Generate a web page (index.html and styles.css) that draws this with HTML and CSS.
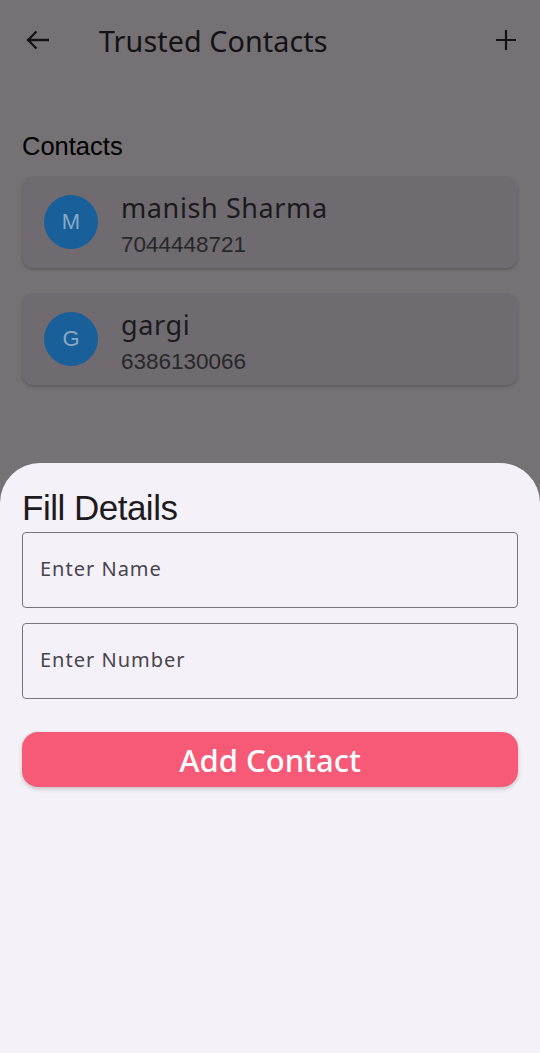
FILE: index.html
```html
<!DOCTYPE html>
<html>
<head>
<meta charset="utf-8">
<link rel="stylesheet" href="styles.css">
</head>
<body>
<div class="screen">
  <header class="appbar">
    <svg class="icon back" width="26" height="24" viewBox="0 0 26 24"><path d="M24 12H3.5M11.5 3.5L3 12L11.5 20.5" fill="none" stroke="#141214" stroke-width="2.3"/></svg>
    <h1 class="title">Trusted Contacts</h1>
    <svg class="icon plus" width="22" height="22" viewBox="0 0 22 22"><path d="M11 1V21M1 11H21" fill="none" stroke="#141214" stroke-width="2.2"/></svg>
  </header>
  <main class="content">
    <h2 class="section">Contacts</h2>
    <div class="card">
      <div class="avatar">M</div>
      <div class="info">
        <div class="name">manish Sharma</div>
        <div class="phone">7044448721</div>
      </div>
    </div>
    <div class="card">
      <div class="avatar">G</div>
      <div class="info">
        <div class="name">gargi</div>
        <div class="phone">6386130066</div>
      </div>
    </div>
  </main>
  <section class="sheet">
    <h2 class="sheet-title">Fill Details</h2>
    <div class="field"><span class="placeholder">Enter Name</span></div>
    <div class="field"><span class="placeholder">Enter Number</span></div>
    <button class="add-btn">Add Contact</button>
  </section>
</div>
</body>
</html>
```

FILE: styles.css
```css
html, body {
  margin: 0;
  padding: 0;
}
body {
  width: 540px;
  height: 1053px;
  overflow: hidden;
  background: #757175;
}
.screen {
  position: relative;
  width: 540px;
  height: 1053px;
  background: #757175;
}
.appbar {
  display: flex;
  align-items: center;
  height: 80px;
  padding: 0 23px 0 25px;
}
.icon.back {
  flex: none;
}
.title {
  flex: 1;
  margin: 0 0 0 48px;
  font-family: "Noto Sans", sans-serif;
  font-weight: 400;
  font-size: 28.7px;
  color: #141214;
  letter-spacing: 0.1px;
}
.icon.plus {
  flex: none;
}
.content {
  padding: 50px 22px 0 22px;
}
.section {
  margin: 0 0 14px 0;
  font-family: "Liberation Sans", Arial, sans-serif;
  font-weight: 400;
  font-size: 25.5px;
  line-height: 32px;
  color: #000;
}
.card {
  display: flex;
  align-items: center;
  height: 92px;
  margin-bottom: 25px;
  padding: 0 22px;
  background: #6f6b70;
  border-radius: 12px;
  box-shadow: 0 2px 3px rgba(0,0,0,0.18);
}
.avatar {
  flex: none;
  width: 54px;
  height: 54px;
  border-radius: 50%;
  background: #19609a;
  color: #88a9c4;
  font-family: "Liberation Sans", Arial, sans-serif;
  font-size: 22px;
  display: flex;
  align-items: center;
  justify-content: center;
}
.info {
  margin-left: 23px;
  padding-top: 6px;
  display: flex;
  flex-direction: column;
}
.name {
  font-family: "Noto Sans", sans-serif;
  font-size: 27px;
  line-height: 32px;
  color: #1c1a1d;
  letter-spacing: 0.6px;
}
.phone {
  font-family: "Liberation Sans", Arial, sans-serif;
  font-size: 22.5px;
  line-height: 26px;
  margin-top: 8px;
  color: #29272a;
}
.sheet {
  position: absolute;
  left: 0;
  right: 0;
  top: 463px;
  bottom: 0;
  background: #f5f1f8;
  border-radius: 40px 40px 0 0;
  padding: 26px 22px 0 22px;
  display: flex;
  flex-direction: column;
}
.sheet-title {
  margin: 0 0 5px 0;
  font-family: "Liberation Sans", Arial, sans-serif;
  font-weight: 400;
  font-size: 35px;
  line-height: 38px;
  color: #1d1b20;
  letter-spacing: -0.5px;
}
.field {
  height: 74px;
  border: 1px solid #79747e;
  border-radius: 4px;
  margin-bottom: 15px;
  display: flex;
  align-items: center;
  padding: 0 17px;
}
.placeholder {
  font-family: "Noto Sans", sans-serif;
  font-size: 20px;
  color: #49454f;
  letter-spacing: 1px;
  margin-top: -3px;
}
.add-btn {
  margin-top: 18px;
  height: 55px;
  border: none;
  border-radius: 16px;
  background: #f75a76;
  color: #fff;
  font-family: "Noto Sans", sans-serif;
  font-size: 31px;
  font-weight: 500;
  box-shadow: 0 2px 4px rgba(0,0,0,0.2);
  padding: 0;
}
```
